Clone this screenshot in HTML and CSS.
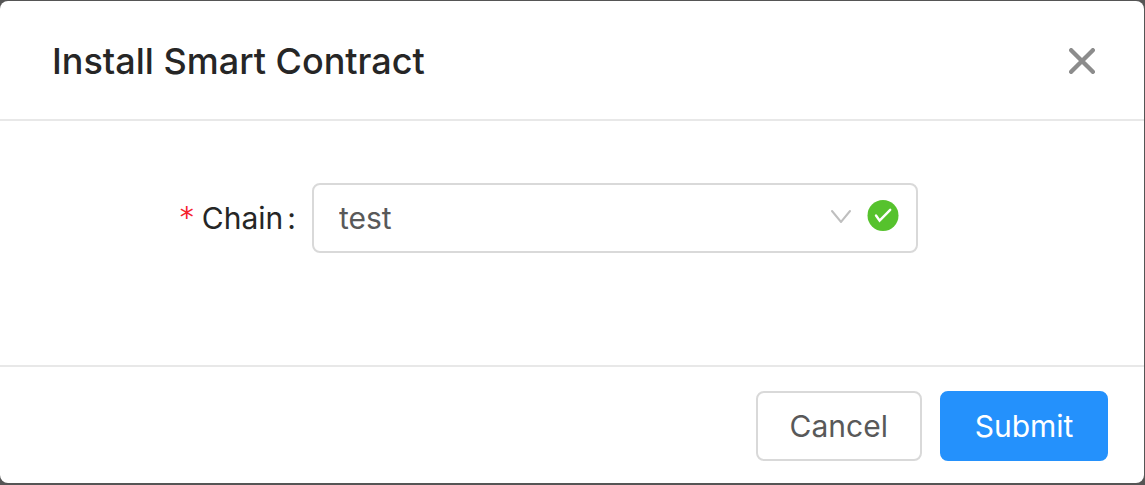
FILE: index.html
```html
<!DOCTYPE html>
<html lang="en">
<head>
  <meta charset="utf-8">
  <meta name="viewport" content="width=device-width, initial-scale=1">
  <title>Install Smart Contract</title>
  <link rel="stylesheet" href="styles.css">
</head>
<body>
  <form class="modal" role="dialog" aria-labelledby="modal-title">
    <header class="modal-header">
      <h1 class="modal-title" id="modal-title">Install Smart Contract</h1>
      <button class="modal-close" type="button" aria-label="Close">
        <svg class="close-icon" viewBox="0 0 24 24" aria-hidden="true">
          <path d="M2 2L22 22M22 2L2 22"/>
        </svg>
      </button>
    </header>
    <div class="modal-body">
      <label class="field-label" for="chain"><span class="required">*</span><span>Chain</span><span class="colon">:</span></label>
      <div class="select-wrap">
        <select class="select" id="chain" name="chain" required>
          <option selected>test</option>
        </select>
        <span class="select-icons" aria-hidden="true">
          <svg class="arrow-icon" viewBox="0 0 20 14">
            <path d="M1 2L10 13L19 2"/>
          </svg>
          <svg class="valid-icon" viewBox="0 0 32 32">
            <circle cx="16" cy="15.5" r="15.5"/>
            <path d="M9 15.5L12.6 20.6L23.2 9.8"/>
          </svg>
        </span>
      </div>
    </div>
    <footer class="modal-footer">
      <button class="button" type="button">Cancel</button>
      <button class="button button-primary" type="submit">Submit</button>
    </footer>
  </form>
</body>
</html>
```
FILE: styles.css
```css
* {
  box-sizing: border-box;
}

body {
  margin: 0;
  min-height: 100vh;
  display: flex;
  padding: 1px 1px 2px 0;
  background: #555;
  font-family: Inter, "Liberation Sans", sans-serif;
  font-size: 30px;
  line-height: 46px;
  color: #262626;
}

.modal {
  flex: 1;
  display: flex;
  flex-direction: column;
  background: #fff;
  border-radius: 8px;
}

.modal-header {
  display: flex;
  align-items: center;
  justify-content: space-between;
  padding: 37px 49px 35px 52px;
  border-bottom: 2px solid #e8e8e8;
}

.modal-title {
  margin: 0;
  font-size: 36px;
  font-weight: 500;
  line-height: 46px;
}

.modal-close {
  display: flex;
  padding: 0;
  border: 0;
  background: none;
  cursor: pointer;
}

.close-icon {
  width: 26px;
  height: 26px;
  fill: none;
  stroke: #8c8c8c;
  stroke-width: 4;
  stroke-linecap: round;
}

.modal-body {
  flex: 1;
  display: grid;
  grid-template-columns: 312fr 606fr 226fr;
  align-items: start;
  padding: 62px 0;
}

.field-label {
  display: flex;
  justify-content: flex-end;
  padding: 12px 16px 12px 0;
}

.required {
  margin-right: 8px;
  font-family: "DejaVu Sans", sans-serif;
  font-size: 28px;
  color: #f5222d;
}

.colon {
  margin-left: 4px;
}

.select-wrap {
  position: relative;
}

.select {
  display: block;
  width: 100%;
  height: 70px;
  padding: 0 96px 0 25px;
  border: 2px solid #d9d9d9;
  border-radius: 8px;
  appearance: none;
  background: #fff;
  color: #595959;
  font: inherit;
}

.select-icons {
  position: absolute;
  top: 0;
  right: 19px;
  height: 66px;
  display: flex;
  align-items: center;
  gap: 16px;
  pointer-events: none;
}

.arrow-icon {
  width: 20px;
  height: 14px;
  fill: none;
  stroke: #bfbfbf;
  stroke-width: 2;
  stroke-linecap: round;
}

.valid-icon {
  width: 32px;
  height: 32px;
  fill: #56c22d;
}

.valid-icon path {
  fill: none;
  stroke: #fff;
  stroke-width: 2.4;
  stroke-linecap: round;
}

.modal-footer {
  display: flex;
  justify-content: flex-end;
  gap: 18px;
  padding: 24px 36px 22px;
  border-top: 2px solid #e8e8e8;
}

.button {
  min-width: 166px;
  padding: 10px 32px;
  border: 2px solid #d9d9d9;
  border-radius: 8px;
  background: #fff;
  color: #595959;
  font: inherit;
  cursor: pointer;
}

.button-primary {
  min-width: 168px;
  border-color: #2491fc;
  background: #2491fc;
  color: #fff;
}
```
